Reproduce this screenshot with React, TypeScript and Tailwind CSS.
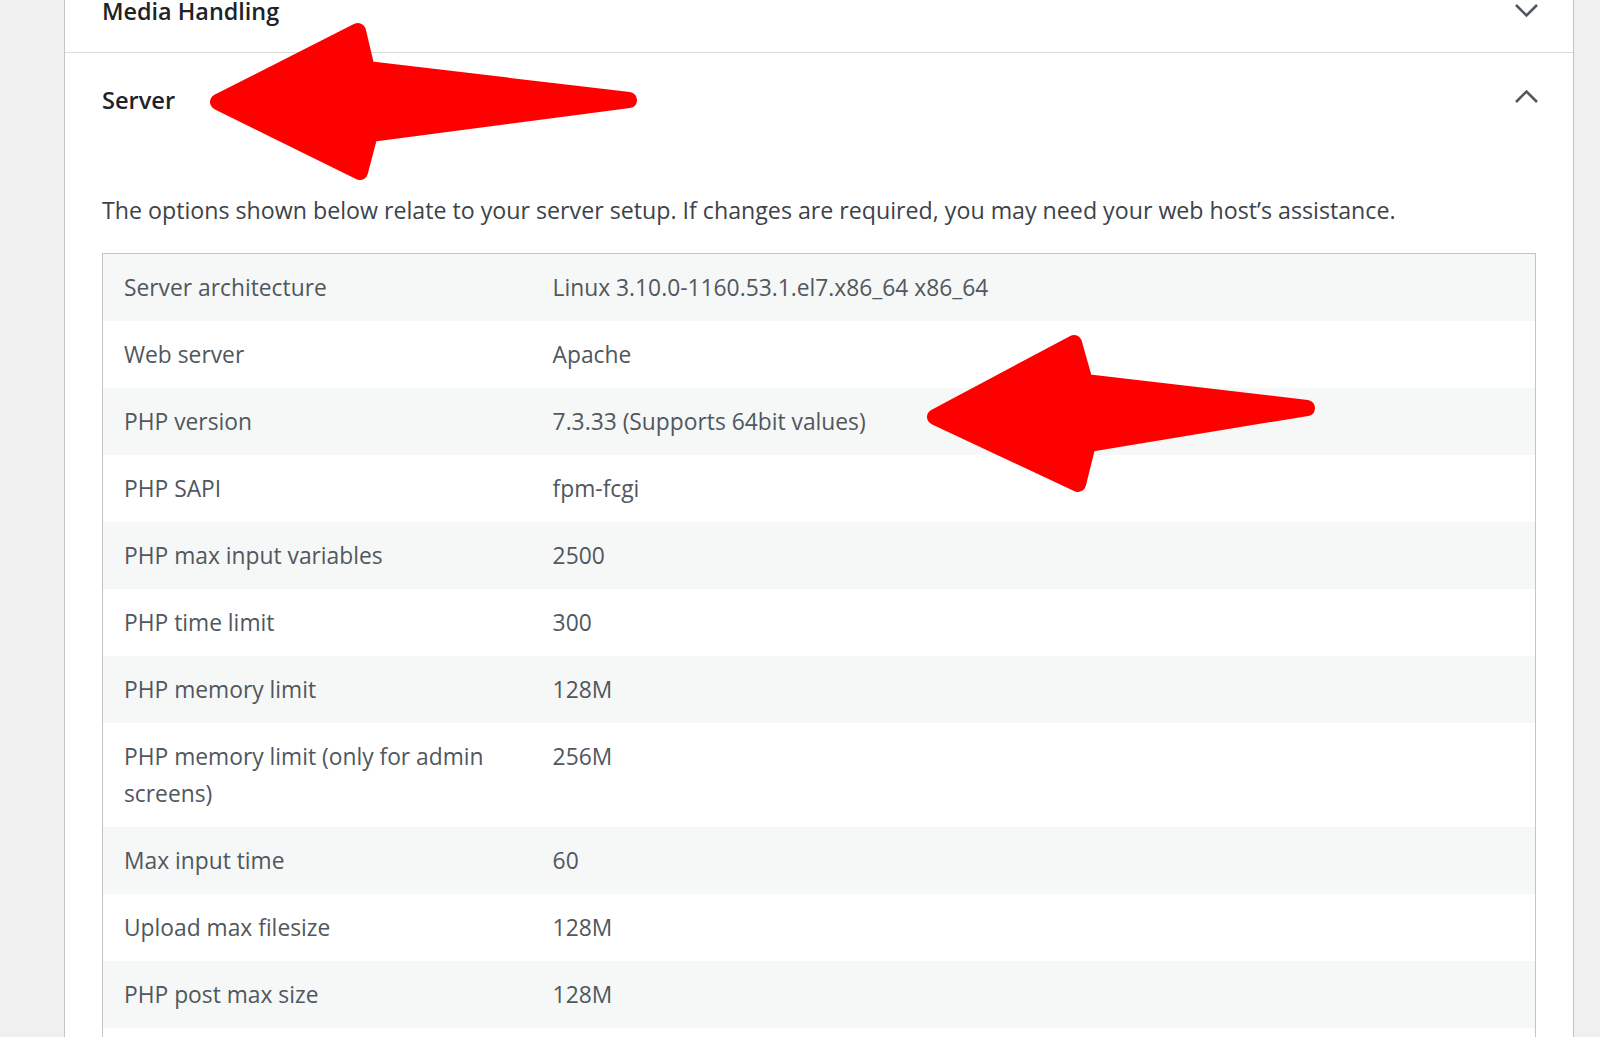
import React from "react";

const rows: [string, string][] = [
  ["Server architecture", "Linux 3.10.0-1160.53.1.el7.x86_64 x86_64"],
  ["Web server", "Apache"],
  ["PHP version", "7.3.33 (Supports 64bit values)"],
  ["PHP SAPI", "fpm-fcgi"],
  ["PHP max input variables", "2500"],
  ["PHP time limit", "300"],
  ["PHP memory limit", "128M"],
  ["PHP memory limit (only for admin screens)", "256M"],
  ["Max input time", "60"],
  ["Upload max filesize", "128M"],
  ["PHP post max size", "128M"],
];

function Chevron({ up }: { up?: boolean }) {
  return (
    <svg width="25" height="15" viewBox="0 0 25 15" className="shrink-0">
      <polyline
        points={up ? "2,13 12.5,2.5 23,13" : "2,2 12.5,12.5 23,2"}
        fill="none"
        stroke="#50575e"
        strokeWidth="2.6"
      />
    </svg>
  );
}

export default function App() {
  return (
    <div className="relative h-[1037px] w-[1600px] overflow-hidden bg-[#f0f0f1] font-['Open_Sans','Noto_Sans',sans-serif]">
      <div className="ml-[64px] flex h-full w-[1510px] flex-col border-x border-[#c3c4c7] bg-white">
        <div className="-mt-[31px] flex h-[84px] shrink-0 items-center justify-between border-b border-[#dcdcde] pl-[37px] pr-[34px]">
          <span className="text-[23.4px] font-semibold leading-[36px] text-[#1d2327]">Media Handling</span>
          <Chevron />
        </div>
        <div className="flex h-[93px] shrink-0 items-center justify-between pl-[37px] pr-[34px]">
          <span className="text-[23.6px] font-semibold leading-[36px] text-[#1d2327]">Server</span>
          <div className="-mt-[6px]">
            <Chevron up />
          </div>
        </div>
        <div className="px-[37px]">
          <p className="mt-[46px] text-[23.2px] leading-[37px] text-[#3c434a]">
            The options shown below relate to your server setup. If changes are required, you may need your web host’s assistance.
          </p>
          <div className="mt-[24px] w-[1434px] border border-[#c3c4c7]">
            {rows.map(([k, v], i) => (
              <div
                key={k}
                className={`flex text-[22.8px] leading-[37px] text-[#50575e] ${i % 2 === 0 ? "bg-[#f6f7f7]" : "bg-white"}`}
              >
                <div className="w-[30%] shrink-0 px-[21px] py-[15px]">{k}</div>
                <div className="flex-1 px-[20px] py-[15px]">{v}</div>
              </div>
            ))}
            <div className="h-[67px] bg-white" />
          </div>
        </div>
      </div>
      <svg
        className="pointer-events-none absolute inset-0"
        width="1600"
        height="1037"
        viewBox="0 0 1600 1037"
      >
        <polygon
          points="218,102 358,31 367,69 629,100 370,134 360,172"
          fill="#ff0000"
          stroke="#ff0000"
          strokeWidth="16"
          strokeLinejoin="round"
        />
        <polygon
          points="935,417 1074,343 1085,382 1307,408 1088,444 1078,484"
          fill="#ff0000"
          stroke="#ff0000"
          strokeWidth="16"
          strokeLinejoin="round"
        />
      </svg>
    </div>
  );
}
